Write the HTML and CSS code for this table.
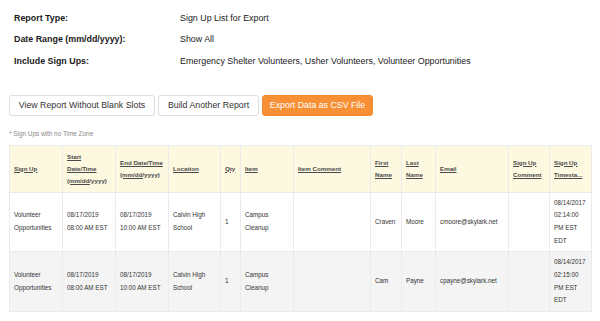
FILE: index.html
```html
<!DOCTYPE html>
<html>
<head>
<meta charset="utf-8">
<link rel="stylesheet" href="styles.css">
</head>
<body>
<div class="page">
  <div class="info">
    <div class="label">Report Type:</div><div class="value">Sign Up List for Export</div>
    <div class="label">Date Range (mm/dd/yyyy):</div><div class="value">Show All</div>
    <div class="label">Include Sign Ups:</div><div class="value">Emergency Shelter Volunteers, Usher Volunteers, Volunteer Opportunities</div>
  </div>
  <div class="actions">
    <button class="btn b1">View Report Without Blank Slots</button>
    <button class="btn b2">Build Another Report</button>
    <button class="btn btn-primary b3">Export Data as CSV File</button>
  </div>
  <div class="note">* Sign Ups with no Time Zone</div>
  <table class="report">
    <colgroup>
      <col class="c-signup"><col class="c-start"><col class="c-end"><col class="c-loc"><col class="c-qty"><col class="c-item"><col class="c-icomm"><col class="c-first"><col class="c-last"><col class="c-email"><col class="c-scomm"><col class="c-ts">
    </colgroup>
    <thead>
      <tr>
        <th><a>Sign Up</a></th>
        <th><a>Start Date/Time (mm/dd/yyyy)</a></th>
        <th><a>End Date/Time (mm/dd/yyyy)</a></th>
        <th><a>Location</a></th>
        <th><a>Qty</a></th>
        <th><a>Item</a></th>
        <th><a>Item Comment</a></th>
        <th><a>First Name</a></th>
        <th><a>Last Name</a></th>
        <th><a>Email</a></th>
        <th><a>Sign Up Comment</a></th>
        <th><a>Sign Up Timesta...</a></th>
      </tr>
    </thead>
    <tbody>
      <tr>
        <td>Volunteer Opportunities</td>
        <td>08/17/2019<br>08:00 AM EST</td>
        <td>08/17/2019<br>10:00 AM EST</td>
        <td>Calvin High School</td>
        <td>1</td>
        <td>Campus Cleanup</td>
        <td></td>
        <td>Craven</td>
        <td>Moore</td>
        <td>cmoore@skylark.net</td>
        <td></td>
        <td>08/14/2017<br>02:14:00<br>PM EST<br>EDT</td>
      </tr>
      <tr class="alt">
        <td>Volunteer Opportunities</td>
        <td>08/17/2019<br>08:00 AM EST</td>
        <td>08/17/2019<br>10:00 AM EST</td>
        <td>Calvin High School</td>
        <td>1</td>
        <td>Campus Cleanup</td>
        <td></td>
        <td>Cam</td>
        <td>Payne</td>
        <td>cpayne@skylark.net</td>
        <td></td>
        <td>08/14/2017<br>02:15:00<br>PM EST<br>EDT</td>
      </tr>
    </tbody>
  </table>
</div>
</body>
</html>
```

FILE: styles.css
```css
html, body {
  margin: 0;
  padding: 0;
  background: #ffffff;
}
body {
  font-family: "Liberation Sans", Arial, Helvetica, sans-serif;
  color: #222;
}
.page {
  padding: 0 10px 0 9px;
}
.info {
  display: grid;
  grid-template-columns: 166px auto;
  grid-auto-rows: 21.5px;
  align-items: center;
  padding: 7px 0 0 5px;
  font-size: 8.9px;
  color: #1a1a1a;
}
.label {
  font-weight: bold;
}
.actions {
  display: flex;
  gap: 3px;
  margin-top: 23px;
}
.btn {
  height: 21px;
  box-sizing: border-box;
  border: 1px solid #dedede;
  border-radius: 3px;
  background: #ffffff;
  color: #333;
  font-family: "Liberation Sans", Arial, sans-serif;
  font-size: 8.8px;
  padding: 0;
  margin: 0;
  white-space: nowrap;
  text-align: center;
}
.b1 { width: 146px; }
.b2 { width: 101px; }
.b3 { width: 111px; }
.btn-primary {
  background: #f78f35;
  border-color: #f08a30;
  color: #ffffff;
}
.note {
  margin-top: 14px;
  font-size: 6.4px;
  color: #8a8a8a;
  height: 11px;
}
.report {
  margin-top: 4px;
  border-collapse: collapse;
  table-layout: fixed;
  width: 582px;
}
.c-signup { width: 53px; }
.c-start { width: 53px; }
.c-end { width: 53px; }
.c-loc { width: 52px; }
.c-qty { width: 20px; }
.c-item { width: 53px; }
.c-icomm { width: 77px; }
.c-first { width: 31px; }
.c-last { width: 34px; }
.c-email { width: 73px; }
.c-scomm { width: 41px; }
.c-ts { width: 42px; }
.report th, .report td {
  border: 1px solid #ebebeb;
  text-align: left;
  vertical-align: middle;
  padding: 4px 4px;
  overflow: hidden;
}
.report th {
  background: #fdf8e0;
  font-size: 6.2px;
  line-height: 12px;
  font-weight: bold;
  height: 35px;
  padding: 5px 4px;
}
.report th a {
  color: #4a4a4a;
  text-decoration: underline;
}
.report td {
  font-size: 6.3px;
  line-height: 12.7px;
  color: #333;
  height: 50px;
}
.report tr.alt td {
  background: #f4f4f4;
}
```
